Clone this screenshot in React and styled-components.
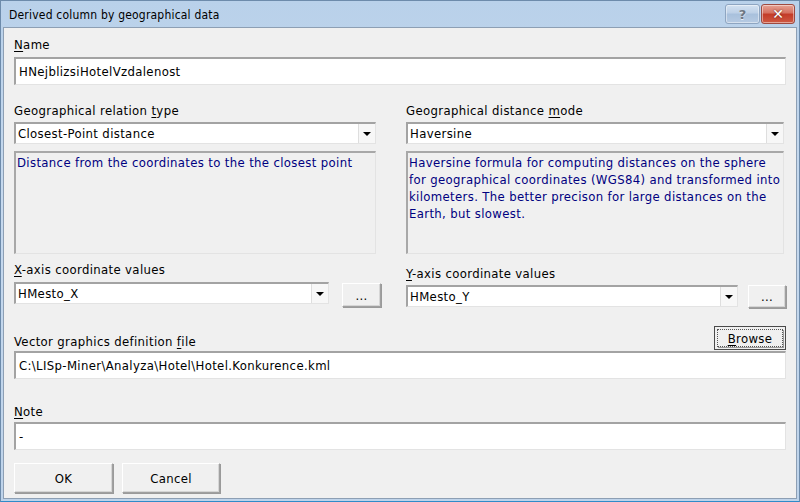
import React from 'react'
import styled, { createGlobalStyle } from 'styled-components'

const GlobalStyle = createGlobalStyle`
  html, body {
    margin: 0;
    padding: 0;
    background: #ffffff;
  }
  body {
    font-family: "DejaVu Sans Condensed", "Liberation Sans", sans-serif;
    font-size: 13px;
    letter-spacing: 0.35px;
    color: #000;
  }
`

const Window = styled.div`
  width: 800px;
  height: 502px;
  box-sizing: border-box;
  display: flex;
  flex-direction: column;
  background: linear-gradient(to bottom, #b9d1ea, #c6d9ee 40%, #bed3ea);
  border: 1px solid #6d8bab;
  border-bottom-color: #2f8bc9;
  padding: 0 2px 2px 2px;
`

const TitleBar = styled.div`
  height: 26px;
  display: flex;
  align-items: center;
  justify-content: space-between;
  padding: 0 2px 0 6px;
`

const Title = styled.div`
  font-size: 12px;
  letter-spacing: 0.2px;
  color: #000;
  padding-top: 2px;
`

const CaptionButtons = styled.div`
  display: flex;
  gap: 1px;
  align-self: flex-start;
  margin-top: 3px;
`

const CaptionButton = styled.div`
  height: 20px;
  width: ${(p) => (p.$variant === 'close' ? '34px' : '35px')};
  box-sizing: border-box;
  border-radius: 3px;
  border: 1px solid ${(p) => (p.$variant === 'close' ? '#9e4a40' : '#8ea5c1')};
  background: ${(p) =>
    p.$variant === 'close'
      ? 'linear-gradient(to bottom, #e6a294 0%, #d5705f 45%, #c33b27 50%, #cf5a44 100%)'
      : 'linear-gradient(to bottom, #d4e2f1 0%, #bccfe6 45%, #a8c0dc 50%, #b6cae2 100%)'};
  box-shadow: inset 0 0 0 1px rgba(255, 255, 255, 0.45);
  display: flex;
  align-items: center;
  justify-content: center;
  color: ${(p) => (p.$variant === 'close' ? '#fff' : '#6e7783')};
  font-family: "DejaVu Sans", sans-serif;
  font-weight: bold;
  letter-spacing: 0;
  font-size: ${(p) => (p.$variant === 'close' ? '14px' : '13px')};
  text-shadow: ${(p) => (p.$variant === 'close' ? '0 0 2px #5a1c12' : '0 1px 0 #e8eef6')};
`

const Content = styled.div`
  flex: 1;
  background: #f0f0f0;
  border: 1px solid #8d9fb4;
  padding: 9px 10px 0 10px;
  display: flex;
  flex-direction: column;
`

const Label = styled.div`
  height: 16px;
  line-height: 16px;
  white-space: nowrap;
  margin-top: ${(p) => p.$top || 0}px;
`

const Accel = styled.span`
  text-decoration: underline;
  text-underline-offset: 2px;
`

const TextBox = styled.div`
  height: 28px;
  box-sizing: border-box;
  margin-top: ${(p) => p.$top || 0}px;
  background: #fff;
  border-style: solid;
  border-width: 2px 1px 1px 2px;
  border-color: #a3a3a3 #e3e3e3 #e3e3e3 #a3a3a3;
  padding: 0 4px 0 3px;
  display: flex;
  align-items: center;
  white-space: nowrap;
`

const Columns = styled.div`
  display: grid;
  grid-template-columns: 362px 1fr;
  column-gap: 30px;
  margin-top: ${(p) => p.$top || 0}px;
`

const Column = styled.div`
  display: flex;
  flex-direction: column;
  padding-top: ${(p) => p.$shift || 0}px;
  padding-right: ${(p) => p.$right || 0}px;
`

const Combo = styled.div`
  height: 22px;
  box-sizing: border-box;
  width: ${(p) => (p.$width ? `${p.$width}px` : 'auto')};
  flex-shrink: 0;
  margin-top: ${(p) => p.$top || 0}px;
  background: #fff;
  border-style: solid;
  border-width: 2px 1px 1px 2px;
  border-color: #a3a3a3 #e3e3e3 #e3e3e3 #a3a3a3;
  display: flex;
  align-items: stretch;
`

const ComboText = styled.div`
  flex: 1;
  padding-left: 2px;
  display: flex;
  align-items: center;
  white-space: nowrap;
`

const ComboArrow = styled.div`
  width: 17px;
  box-sizing: border-box;
  background: #f7f7f7;
  border-left: 1px solid #dedede;
  display: flex;
  align-items: center;
  justify-content: center;
`

const Triangle = styled.div`
  width: 0;
  height: 0;
  border-left: 4px solid transparent;
  border-right: 4px solid transparent;
  border-top: 4px solid #000;
`

const DescBox = styled.div`
  height: 103px;
  box-sizing: border-box;
  margin-top: 7px;
  border-style: solid;
  border-width: 2px 1px 1px 2px;
  border-color: #a8a8a8 #e3e3e3 #e3e3e3 #a8a8a8;
  padding: 1px 0 0 1px;
  color: #000080;
  line-height: 17px;
  white-space: nowrap;
  overflow: hidden;
`

const InlineRow = styled.div`
  display: flex;
  align-items: flex-start;
  gap: ${(p) => p.$gap}px;
  margin-top: ${(p) => p.$top || 0}px;
`

const RaisedButton = styled.div`
  box-sizing: border-box;
  width: ${(p) => p.$width}px;
  height: ${(p) => p.$height}px;
  flex-shrink: 0;
  margin-top: ${(p) => p.$top || 0}px;
  background: #f0f0f0;
  border-style: solid;
  border-width: 1px;
  border-color: #ffffff #a0a0a0 #a0a0a0 #ffffff;
  box-shadow: inset -1px -1px 0 #d6d6d6, 1px 1px 0 #9a9a9a;
  display: flex;
  align-items: center;
  justify-content: center;
`

const FileHeader = styled.div`
  display: flex;
  justify-content: space-between;
  align-items: flex-end;
  margin-top: ${(p) => p.$top || 0}px;
`

const DefaultButton = styled.div`
  width: 72px;
  height: 24px;
  box-sizing: border-box;
  border: 1px solid #4a4a4a;
  background: #f0f0f0;
  padding: 2px;
  display: flex;
`

const FocusRect = styled.div`
  flex: 1;
  border: 1px dotted #555;
  display: flex;
  align-items: center;
  justify-content: center;
  box-shadow: 1px 1px 0 #9a9a9a;
`

const ButtonBar = styled.div`
  display: flex;
  gap: 9px;
  margin-top: 13px;
`

const Combobox = ({ value, width, top }) => (
  <Combo $width={width} $top={top}>
    <ComboText>{value}</ComboText>
    <ComboArrow>
      <Triangle />
    </ComboArrow>
  </Combo>
)

export default function App() {
  return (
    <>
      <GlobalStyle />
      <Window>
        <TitleBar>
          <Title>Derived column by geographical data</Title>
          <CaptionButtons>
            <CaptionButton $variant="help">?</CaptionButton>
            <CaptionButton $variant="close">✕</CaptionButton>
          </CaptionButtons>
        </TitleBar>
        <Content>
          <Label>
            <Accel>N</Accel>ame
          </Label>
          <TextBox $top={4}>HNejblizsiHotelVzdalenost</TextBox>

          <Columns $top={18}>
            <Column>
              <Label>
                Geographical relation <Accel>t</Accel>ype
              </Label>
              <Combobox value="Closest-Point distance" top={3} />
              <DescBox>Distance from the coordinates to the the closest point</DescBox>
            </Column>
            <Column $right={2}>
              <Label>
                Geographical distance <Accel>m</Accel>ode
              </Label>
              <Combobox value="Haversine" top={3} />
              <DescBox>
                Haversine formula for computing distances on the sphere
                <br />
                for geographical coordinates (WGS84) and transformed into
                <br />
                kilometers. The better precison for large distances on the
                <br />
                Earth, but slowest.
              </DescBox>
            </Column>
          </Columns>

          <Columns $top={8}>
            <Column>
              <Label>
                <Accel>X</Accel>-axis coordinate values
              </Label>
              <InlineRow $gap={13} $top={4}>
                <Combobox value="HMesto_X" width={315} />
                <RaisedButton $width={39} $height={24} $top={1}>
                  ...
                </RaisedButton>
              </InlineRow>
            </Column>
            <Column $shift={4}>
              <Label>
                <Accel>Y</Accel>-axis coordinate values
              </Label>
              <InlineRow $gap={10} $top={3}>
                <Combobox value="HMesto_Y" width={332} />
                <RaisedButton $width={38} $height={23}>
                  ...
                </RaisedButton>
              </InlineRow>
            </Column>
          </Columns>

          <FileHeader $top={18}>
            <Label>
              Vector graphics definition <Accel>f</Accel>ile
            </Label>
            <DefaultButton>
              <FocusRect>
                <span>
                  <Accel>B</Accel>rowse
                </span>
              </FocusRect>
            </DefaultButton>
          </FileHeader>
          <TextBox $top={1}>C:\LISp-Miner\Analyza\Hotel\Hotel.Konkurence.kml</TextBox>

          <Label $top={25}>
            <Accel>N</Accel>ote
          </Label>
          <TextBox $top={2}>-</TextBox>

          <ButtonBar>
            <RaisedButton $width={99} $height={30}>
              OK
            </RaisedButton>
            <RaisedButton $width={98} $height={30}>
              Cancel
            </RaisedButton>
          </ButtonBar>
        </Content>
      </Window>
    </>
  )
}
